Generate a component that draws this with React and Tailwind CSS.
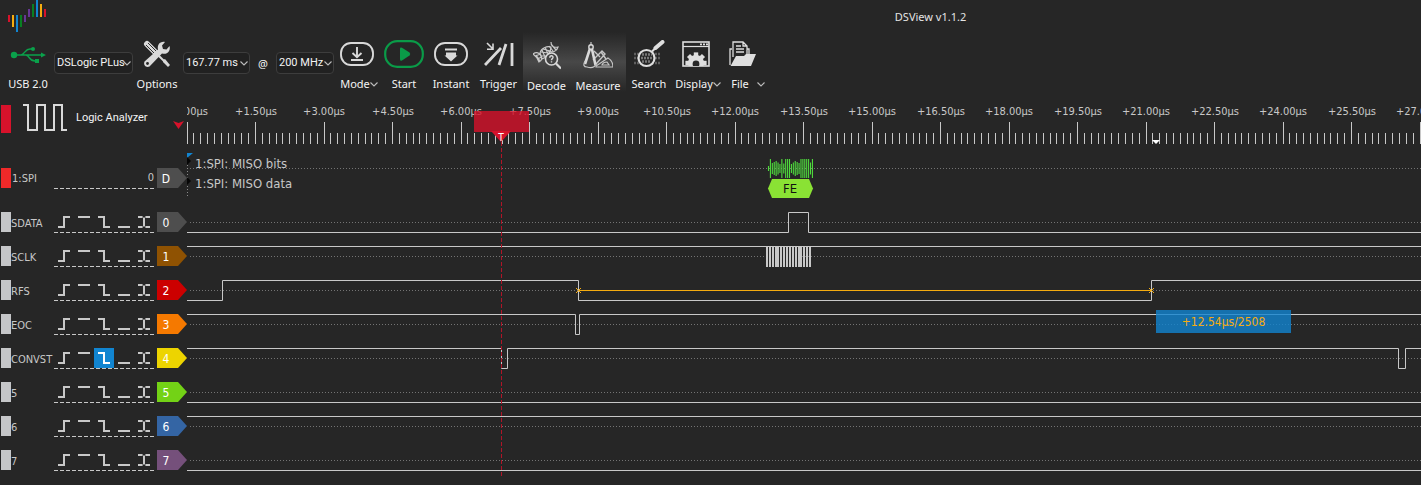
import React, { useEffect, useRef, useState } from "react";

const PITCH = 68.5;

const channels = [
  { id: "0", name: "SDATA", color: "#4e4e4e", d: "M0 27.5H601.5V7.5H621.5V27.5H6000" },
  { id: "1", name: "SCLK", color: "#8f5202", d: "M0 7.5H6000", clock: true },
  { id: "2", name: "RFS", color: "#cc0000", d: "M0 27.5H35.5V7.5H391.5V27.5H964.5V7.5H6000", measure: true },
  { id: "3", name: "EOC", color: "#f57900", d: "M0 7.5H388.5V27.5H392.5V7.5H6000" },
  { id: "4", name: "CONVST", color: "#edd400", d: "M0 7.5H314.5V27.5H320.5V7.5H1211.5V27.5H1218.5V7.5H6000", active: 2 },
  { id: "5", name: "5", color: "#73d216", d: "M0 27.5H6000" },
  { id: "6", name: "6", color: "#3465a4", d: "M0 7.5H6000" },
  { id: "7", name: "7", color: "#75507b", d: "M0 27.5H6000" },
];

const triggers = [
  ["Rising edge", "M4 15H10V5H16"],
  ["High level", "M4 5H16"],
  ["Falling edge", "M4 5H10V15H16"],
  ["Low level", "M4 15H16"],
  ["Either edge", "M4 5H8.6M11.4 5H16M4 15H8.6M11.4 15H16M10 5.6V14.4"],
];

const logoBars = [
  [8, 15, 7, "#d7122b"], [12, 15, 12, "#f5ac10"], [16, 15, 17, "#1185d1"], [20, 15, 12, "#087f23"],
  [24, 15, 7, "#673695"], [28, 9, 8, "#673695"], [32, 4, 13, "#087f23"], [36, 0, 17, "#1185d1"],
  [40, 4, 13, "#f5ac10"], [44, 9, 8, "#d7122b"],
];

function Chevron({ className }) {
  return (
    <svg className={className} width="8" height="5" viewBox="0 0 8 5" fill="none" stroke="#bdbdbd" strokeWidth="1.1">
      <path d="M.5 .5L4 4L7.5 .5" />
    </svg>
  );
}

function Picker({ label, value, className }) {
  return (
    <div className={"relative mt-[12px] h-[22px] shrink-0 " + className}>
      <select
        aria-label={label}
        defaultValue={value}
        className="h-full w-full appearance-none rounded-sm border border-[#3d3d3d] bg-[#212121] pl-[2px] pt-px font-['Roboto',sans-serif] text-[11px] text-[#f4f4f4]"
      >
        <option>{value}</option>
      </select>
      <Chevron className="pointer-events-none absolute right-[2px] top-[9px]" />
    </div>
  );
}

function Tool({ label, className, menu, menuGap = "pl-1", children }) {
  return (
    <button type="button" className={"flex h-[60px] shrink-0 flex-col items-center gap-2 whitespace-nowrap " + className}>
      <span className="flex h-7 items-center">{children}</span>
      <span className={"flex h-4 items-center leading-4 " + (menu ? menuGap : "")}>
        {label}
        {menu && <Chevron />}
      </span>
    </button>
  );
}

const UsbIcon = () => (
  <svg width="36" height="18" viewBox="0 0 36 18" fill="none" stroke="#0aa14b" strokeWidth="1.4">
    <path d="M4 10H32M11 10C15 9 15 4 20 4H23M16 10C20 11 19 16 25 16H27" />
    <circle cx="4" cy="10" r="3.2" fill="#0aa14b" stroke="none" />
    <circle cx="23" cy="4" r="2" fill="#0aa14b" stroke="none" />
    <path d="M31 7.5L36 10L31 12.5ZM25 14H29V18H25Z" fill="#0aa14b" stroke="none" />
  </svg>
);

const ToolsIcon = () => (
  <svg width="28" height="28" viewBox="0 0 28 28" fill="none">
    <path d="M4 4L13 13" stroke="#d9d9d9" strokeWidth="6" strokeLinecap="round" />
    <path d="M3 5L12 14M5 3L14 12" stroke="#303030" strokeWidth="1" />
    <path d="M14 14L22 22" stroke="#d9d9d9" strokeWidth="2" />
    <path d="M20 20L22 19L27 25L25 27L20 22Z" fill="#d9d9d9" />
    <path d="M1.5 21.5L15 9.5C14 5 17 1 22 2L19 5.5L20 9L23.5 9.5L26.5 6C28 11 24 15 19 13.5L6.5 26.5C3 28 0 25 1.5 21.5Z" fill="#d9d9d9" />
    <circle cx="4.5" cy="23.5" r="1.4" fill="#262626" />
  </svg>
);

const ModeIcon = () => (
  <svg width="34" height="24" viewBox="0 0 34 24" fill="none" stroke="#d9d9d9" strokeWidth="1.9">
    <rect x="1" y="1" width="32" height="22" rx="10" />
    <path d="M17 5V15M12.5 11L17 15.2L21.5 11M11 18H23" />
  </svg>
);

const StartIcon = () => (
  <svg width="40" height="28" viewBox="0 0 40 28" fill="none">
    <rect x="1.2" y="1.2" width="37.6" height="25.6" rx="12" stroke="#0a9b48" strokeWidth="2.2" />
    <path d="M16 9Q16 7 18 7.8L25.5 12.5Q27 14 25.5 15.5L18 20.6Q16 21.5 16 19Z" fill="#0a9b48" />
  </svg>
);

const InstantIcon = () => (
  <svg width="34" height="24" viewBox="0 0 34 24" fill="none">
    <rect x="1" y="1" width="32" height="22" rx="10" stroke="#d9d9d9" strokeWidth="1.9" />
    <path d="M11 7.5H23" stroke="#d9d9d9" strokeWidth="2" />
    <path d="M12 10.5H22V13.5H23.5L17 19.5L10.5 13.5H12Z" fill="#d9d9d9" />
  </svg>
);

const TriggerIcon = () => (
  <svg width="30" height="26" viewBox="0 0 30 26" fill="none" stroke="#d9d9d9">
    <path d="M1 24L17 7M15 24L22 3" strokeWidth="2.8" />
    <path d="M28 2V25" strokeWidth="2.8" />
    <path d="M3 2L8.5 7.5M9 2.5V8.3H3" strokeWidth="1.6" />
  </svg>
);

const DecodeIcon = () => (
  <svg width="28" height="28" viewBox="0 0 28 28" fill="none" stroke="#c9c9c9" strokeWidth="1.2">
    <path d="M0 12C7 7 12 18 6 20C5 17 3 14 0 12ZM2 14L8 12M4 17L9 15M3 13L7 19" />
    <path d="M7 11C8 6 14 4 18 5C18 10 14 15 9 17ZM8 10L15 11M10 7L17 9M9 14L13 14M12 5L15 12M9 8L12 15" />
    <path d="M18 0C18 4 20 6 25 5C24 9 20 11 15 9M18 2L23 8M16 4L20 9" />
    <circle cx="18.5" cy="17" r="6" fill="#424242" stroke="#d9d9d9" strokeWidth="1.6" />
    <path d="M16.800 15.800C16.800 13 20.300 13.200 20 15.500C19.900 16.700 18.500 16.600 18.500 18.200M18.500 19.300V20.500" stroke="#d9d9d9" strokeWidth="1.4" />
    <path d="M23 21.5L28 26.5" stroke="#d9d9d9" strokeWidth="2.2" />
  </svg>
);

const MeasureIcon = () => (
  <svg width="30" height="28" viewBox="0 0 30 28" fill="none" stroke="#c5c5c5">
    <path d="M10 18L19 9L22 12L13 22M11 9L17 15M18 10L23 17" strokeWidth="1.4" />
    <path d="M13 25V24L25 16Q30 19 30 25ZM19 23Q20 20 24 20L26 23Z" strokeWidth="1.2" />
    <path d="M7.500 5L2 22M8.500 5L12.500 23" stroke="#d9d9d9" strokeWidth="2.6" />
    <path d="M2 19Q-1 25 4 25Q11 27 13 22M8 0V4" strokeWidth="1.2" />
    <circle cx="8" cy="5" r="2.2" fill="#444" stroke="#d9d9d9" strokeWidth="1.4" />
  </svg>
);

const SearchIcon = () => (
  <svg width="32" height="28" viewBox="0 0 32 28" fill="none">
    <path d="M1 14H27M1 18H27M1 23H27" stroke="#5f5f5f" strokeWidth="2.5" strokeDasharray="2 1" />
    <circle cx="13.5" cy="18" r="8" fill="#262626" stroke="#dedede" strokeWidth="2.2" />
    <path d="M9 14.500H19M8 18H19M9 21.500H18" stroke="#777" strokeWidth="2.500" strokeDasharray="2 1" />
    <path d="M19 11.5L23 7.5" stroke="#dedede" strokeWidth="2" />
    <path d="M22.5 8L29.5 2" stroke="#dedede" strokeWidth="4" strokeLinecap="round" />
  </svg>
);

const gearTeeth = [0, 45, 90, 135, 180, 225, 270, 315];

const DisplayIcon = () => (
  <svg width="28" height="26" viewBox="0 0 28 26">
    <rect x="1" y="1" width="26" height="24" fill="none" stroke="#dedede" strokeWidth="1.6" />
    <path d="M1 5.5H27" stroke="#dedede" strokeWidth="1.2" />
    <path d="M18 3.3H26" stroke="#dedede" strokeWidth="1.8" strokeDasharray="2 1" />
    <svg x="2" y="6" width="24" height="19" viewBox="2 6 24 19">
      <g fill="#dedede">
        <circle cx="14" cy="22" r="8" />
        {gearTeeth.map((a) => (
          <rect key={a} x="11.8" y="11.4" width="4.4" height="5" transform={`rotate(${a} 14 22)`} />
        ))}
      </g>
      <circle cx="14" cy="23" r="3.4" fill="#262626" />
    </svg>
  </svg>
);

const FileIcon = () => (
  <svg width="27" height="26" viewBox="0 0 27 26" fill="none" stroke="#dedede" strokeWidth="1.3">
    <path d="M4 16V1H14L18 5V14M14 1V5H18M7 5H12M7 8H15M7 11H15" />
    <path d="M3 8H1V24M18 8H20V13" />
    <path d="M1.5 25L7 15H15L17 13H27L22 25Z" fill="#dedede" stroke="none" />
  </svg>
);

const TagShape = ({ color, text }) => (
  <svg className="shrink-0" width="30" height="20" viewBox="0 0 30 20">
    <path d="M0 0H21L30 10L21 20H0Z" fill={color} />
    <text x="9" y="15" textAnchor="middle" fontSize="12" fill="#fff">{text}</text>
  </svg>
);

const Dotted = ({ y }) => <path d={`M3 ${y}H6000`} stroke="#747474" strokeDasharray="1 2" />;

function Ruler() {
  const ref = useRef(null);
  const [width, setWidth] = useState(1234);
  useEffect(() => {
    const observer = new ResizeObserver(([entry]) => setWidth(entry.contentRect.width));
    observer.observe(ref.current);
    return () => observer.disconnect();
  }, []);
  const majors = Array.from({ length: Math.floor(width / PITCH) + 1 }, (_, i) => i);
  return (
    <div ref={ref} className="min-w-0 flex-1">
      <svg className="block h-[46px] w-full" fill="none" fontSize="11">
        {majors.map((i) => (
          <React.Fragment key={i}>
            <text x={Math.round(i * PITCH)} y="11" textAnchor="middle" fill="#c8c8c8">{`+${(i * 1.5).toFixed(2)}µs`}</text>
            {Array.from({ length: 10 }, (_, k) => (
              <path
                key={k}
                d={`M${Math.floor(i * PITCH + (k * PITCH) / 10) + 0.5} ${k ? 29 : 18}V40`}
                stroke="#c8c8c8"
              />
            ))}
          </React.Fragment>
        ))}
        <path d="M287 7H342V28H287Z" fill="#d7122b" fillOpacity=".8" />
        <path d="M304 27H324L314 38Z" fill="#d7122b" />
        <text x="314" y="37" textAnchor="middle" fontSize="10" fill="#fff">T</text>
        <path d="M965 36H973L969 40Z" fill="#fff" />
      </svg>
    </div>
  );
}

const bitHeights = [5, 19, 11, 13, 15, 12, 9, 19, 10, 19, 19, 19, 9, 12, 15, 13, 11, 19, 19, 19, 19, 19, 12, 19];

function DecoderTrace() {
  return (
    <svg className="h-[55px] min-w-0 flex-1" fill="none">
      <Dotted y={18.5} />
      <path d="M.5 3V48" stroke="#8b8b8b" strokeDasharray="1 2" />
      <path d="M0 3H6L0 8Z" fill="#1185d1" />
      <path d="M0 7L4 11L0 15ZM0 27L4 31L0 35Z" fill="#050505" />
      <text x="8" y="18" fontSize="13" fill="#c8c8c8">1:SPI: MISO bits</text>
      <text x="8" y="38" fontSize="13" fill="#c8c8c8">1:SPI: MISO data</text>
      {bitHeights.map((h, i) => (
        <path key={i} d={`M${581.5 + i * 1.91} ${18.5 - h / 2}V${18.5 + h / 2}`} stroke="#4fdc3d" strokeWidth="1.1" />
      ))}
      <path d="M581 38.500L585 29H622L626 38.500L622 48H585Z" fill="#8ae234" />
      <text x="603" y="43" textAnchor="middle" fontSize="13" fill="#111">FE</text>
    </svg>
  );
}

function ChannelTrace({ channel }) {
  return (
    <svg className="h-[34px] min-w-0 flex-1" fill="none">
      <Dotted y={17.5} />
      <path d={channel.d} stroke="#c8c8c8" />
      {channel.clock && (
        <g>
          {Array.from({ length: 16 }, (_, i) => (
            <rect key={i} x={579 + Math.round(i * 2.87)} y="7" width="2" height="21" fill="#c8c8c8" />
          ))}
        </g>
      )}
      {channel.measure && (
        <path d="M391.500 17.500H964.500M389 15L394 20M394 15L389 20M962 15L967 20M967 15L962 20" stroke="#f5ac10" />
      )}
    </svg>
  );
}

export default function App() {
  return (
    <div className="flex min-h-screen flex-col overflow-hidden bg-[#262626] font-['DejaVu_Sans_Condensed','Noto_Sans',sans-serif] text-[11px] text-[#c8c8c8]">
      <header className="flex h-8 shrink-0 items-center text-[#e4e4e4]">
        <svg className="h-8 w-[440px] shrink-0" viewBox="0 0 440 32">
          {logoBars.map(([x, y, h, c]) => (
            <rect key={x} x={x} y={y} width="2" height={h} fill={c} />
          ))}
        </svg>
        <h1 className="flex-1 pt-[2px] text-center font-['Noto_Sans',sans-serif]">DSView v1.1.2</h1>
      </header>

      <nav className="flex h-[72px] shrink-0 pl-1 font-['Noto_Sans',sans-serif] text-[11px] text-[#f4f4f4]">
        <Tool label="USB 2.0" className="mr-[2px] w-12 pt-2"><UsbIcon /></Tool>
        <div className="flex pt-2">
          <Picker label="Device" value="DSLogic PLus" className="w-[79px]" />
        </div>
        <Tool label="Options" className="mr-[2px] w-12 pt-2"><ToolsIcon /></Tool>
        <div className="flex pt-2">
          <Picker label="Duration" value="167.77 ms" className="w-[67px]" />
          <span className="mt-[12px] w-[26px] text-center leading-6">@</span>
          <Picker label="Sample rate" value="200 MHz" className="w-[58px]" />
        </div>
        <Tool label="Mode" menu className="w-[46px] pt-2"><ModeIcon /></Tool>
        <Tool label="Start" className="w-12 pt-2"><StartIcon /></Tool>
        <Tool label="Instant" className="w-[46px] pt-2"><InstantIcon /></Tool>
        <Tool label="Trigger" className="w-[49px] pt-2"><TriggerIcon /></Tool>
        <Tool label="Decode" className="w-[47px] bg-linear-to-b from-[#262626] via-[#484848] to-[#262626] pt-[10px]"><DecodeIcon /></Tool>
        <Tool label="Measure" className="w-14 bg-linear-to-b from-[#262626] via-[#484848] to-[#262626] pt-[10px]"><MeasureIcon /></Tool>
        <Tool label="Search" className="w-[46px] pt-2"><SearchIcon /></Tool>
        <Tool label="Display" menu className="w-12 pt-2"><DisplayIcon /></Tool>
        <Tool label="File" menu menuGap="gap-2 pl-3" className="w-11 pt-2"><FileIcon /></Tool>
      </nav>

      <main className="relative flex flex-col">
        <div className="flex">
          <div className="flex w-[187px] shrink-0 items-start pl-px">
            <span className="mt-px h-7 w-[10px] bg-[#d7122b]" />
            <svg className="ml-3 h-7 w-11" viewBox="0 0 44 28" fill="none" stroke="#d9d9d9" strokeWidth="2">
              <path d="M0 1H5V26H14V1H22V26H31V1H39V26H44" />
            </svg>
            <h2 className="ml-[9px] w-[97px] font-['Roboto',sans-serif] text-[11px] leading-7 text-[#f4f4f4]">Logic Analyzer</h2>
            <svg className="mt-[17px] h-2 w-[11px]" viewBox="0 0 11 8">
              <path d="M0 0L5.5 2L11 0L5.5 8Z" fill="#d7122b" />
            </svg>
          </div>
          <Ruler />
        </div>

        <div className="flex">
          <div className="flex w-[187px] shrink-0 items-start pl-px pt-[18px]">
            <span className="h-5 w-[10px] bg-[#ef2929]" />
            <span className="w-[43px] pl-px leading-[22px]">1:SPI</span>
            <span className="mr-[3px] h-5 w-[100px] text-right leading-5">
              0
              <svg className="block h-px w-full"><path d="M0 .5H100" stroke="#c8c8c8" strokeDasharray="4 2" /></svg>
            </span>
            <TagShape color="#4e4e4e" text="D" />
          </div>
          <DecoderTrace />
        </div>

        {channels.map((c) => (
          <div key={c.id} className="flex">
            <div className="flex w-[187px] shrink-0 items-start pl-px pt-[7px]">
              <span className="h-5 w-[10px] bg-[#c5c6c8]" />
              <span className="w-[43px] whitespace-nowrap leading-6">{c.name}</span>
              <div className="mr-[3px] flex h-5 w-[100px] flex-wrap">
                {triggers.map(([label, d], i) => (
                  <button
                    key={label}
                    type="button"
                    aria-label={`${c.name} ${label}`}
                    aria-pressed={c.active === i}
                    className={"h-5 w-5 " + (c.active === i ? "bg-[#1185d1]" : "")}
                  >
                    <svg width="20" height="20" viewBox="0 0 20 20" fill="none" stroke={c.active === i ? "#fff" : "#c8c8c8"} strokeWidth="2">
                      <path d={d} />
                    </svg>
                  </button>
                ))}
                <svg className="block h-px w-full"><path d="M0 .5H100" stroke="#c8c8c8" strokeDasharray="4 2" /></svg>
              </div>
              <TagShape color={c.color} text={c.id} />
            </div>
            <ChannelTrace channel={c} />
          </div>
        ))}

        <svg className="pointer-events-none absolute left-[501px] top-[38px] h-[336px] w-px">
          <path d="M.5 0V336" stroke="#b01528" strokeDasharray="4 2" />
        </svg>
        <output className="absolute left-[1156px] top-[206px] w-[135px] bg-[#1185d1]/80 pt-px text-center text-[12px] leading-[22px] text-[#f5ac10]">
          +12.54µs/2508
        </output>
      </main>
    </div>
  );
}
